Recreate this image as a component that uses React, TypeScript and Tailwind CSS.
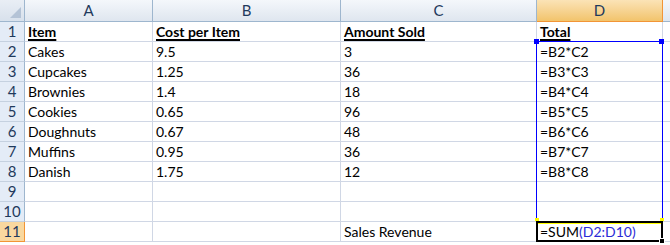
import React from 'react';

const rows: string[][] = [
  ['Item', 'Cost per Item', 'Amount Sold', 'Total'],
  ['Cakes', '9.5', '3', '=B2*C2'],
  ['Cupcakes', '1.25', '36', '=B3*C3'],
  ['Brownies', '1.4', '18', '=B4*C4'],
  ['Cookies', '0.65', '96', '=B5*C5'],
  ['Doughnuts', '0.67', '48', '=B6*C6'],
  ['Muffins', '0.95', '36', '=B7*C7'],
  ['Danish', '1.75', '12', '=B8*C8'],
  ['', '', '', ''],
  ['', '', '', ''],
  ['', '', 'Sales Revenue', ''],
];

const cols = ['A', 'B', 'C', 'D'];

const Cell: React.FC<{ children?: React.ReactNode; bold?: boolean }> = ({ children, bold }) => (
  <div className="flex items-end border-r border-b border-[#d0d7e5] bg-white pl-[3px] pb-[1px] leading-[17px] text-black overflow-hidden whitespace-nowrap">
    {bold ? <span className="font-bold underline underline-offset-[2px] decoration-[1.5px]">{children}</span> : children}
  </div>
);

export default function App() {
  return (
    <div className="relative w-[670px] h-[245px] overflow-hidden bg-white text-[14px] font-['Lato','Liberation_Sans',sans-serif]">
      <div className="grid grid-cols-[25px_128px_188px_196px_126px_1fr] grid-rows-[22px_repeat(11,20px)]">
        {/* corner */}
        <div className="relative border-r border-b border-[#9eb6ce] bg-gradient-to-b from-[#e9eef5] to-[#d8e1ec]">
          <div className="absolute right-[3px] bottom-[3px] w-0 h-0 border-l-[11px] border-l-transparent border-b-[11px] border-b-[#b4c3d6]" />
        </div>
        {cols.map((c) => (
          <div
            key={c}
            className={
              c === 'D'
                ? 'flex items-center justify-center border-r border-b border-[#f29536] bg-gradient-to-b from-[#fbe3b6] to-[#f2c46b] text-[15px] text-[#1f3a5c]'
                : 'flex items-center justify-center border-r border-b border-[#9eb6ce] bg-gradient-to-b from-[#f4f7fb] to-[#dfe6ef] text-[15px] text-[#1f3a5c]'
            }
          >
            {c}
          </div>
        ))}
        <div className="border-b border-[#9eb6ce] bg-gradient-to-b from-[#f4f7fb] to-[#dfe6ef]" />

        {rows.map((r, i) => (
          <React.Fragment key={i}>
            <div
              className={
                i === 10
                  ? 'flex items-center justify-center border-r border-b border-[#f29536] bg-[#f9d89f] text-[15px] text-[#1f3a5c]'
                  : 'flex items-center justify-center border-r border-b border-r-[#9eb6ce] border-b-[#c5d1e0] bg-[#e4ecf7] text-[15px] text-[#1f3a5c]'
              }
            >
              {i + 1}
            </div>
            {r.map((v, j) => (
              <Cell key={j} bold={i === 0 && v !== ''}>
                {i === 10 && j === 3 ? (
                  <span>
                    =SUM<span className="text-[#2b2bd6]">(D2:D10)</span>
                  </span>
                ) : (
                  v
                )}
              </Cell>
            ))}
            <div className="border-b border-[#d0d7e5] bg-white" />
          </React.Fragment>
        ))}
      </div>

      {/* range reference D2:D10 */}
      <div className="absolute left-[536px] top-[41px] w-[127px] h-[181px] border border-[#0000ff] pointer-events-none" />
      <div className="absolute left-[534px] top-[39px] w-[5px] h-[5px] bg-[#0000ff]" />
      <div className="absolute left-[659px] top-[39px] w-[5px] h-[5px] bg-[#0000ff]" />
      <div className="absolute left-[535px] top-[218px] w-[4px] h-[3px] bg-[#ffff00]" />
      <div className="absolute left-[660px] top-[218px] w-[4px] h-[3px] bg-[#ffff00]" />

      {/* active cell D11 */}
      <div className="absolute left-[536px] top-[221px] w-[127px] h-[21px] border-2 border-black pointer-events-none">
        <div className="h-[1px] bg-[#ffff00]" />
      </div>
      <div className="absolute left-[659px] top-[238px] w-[6px] h-[6px] bg-black border border-white" />
    </div>
  );
}
